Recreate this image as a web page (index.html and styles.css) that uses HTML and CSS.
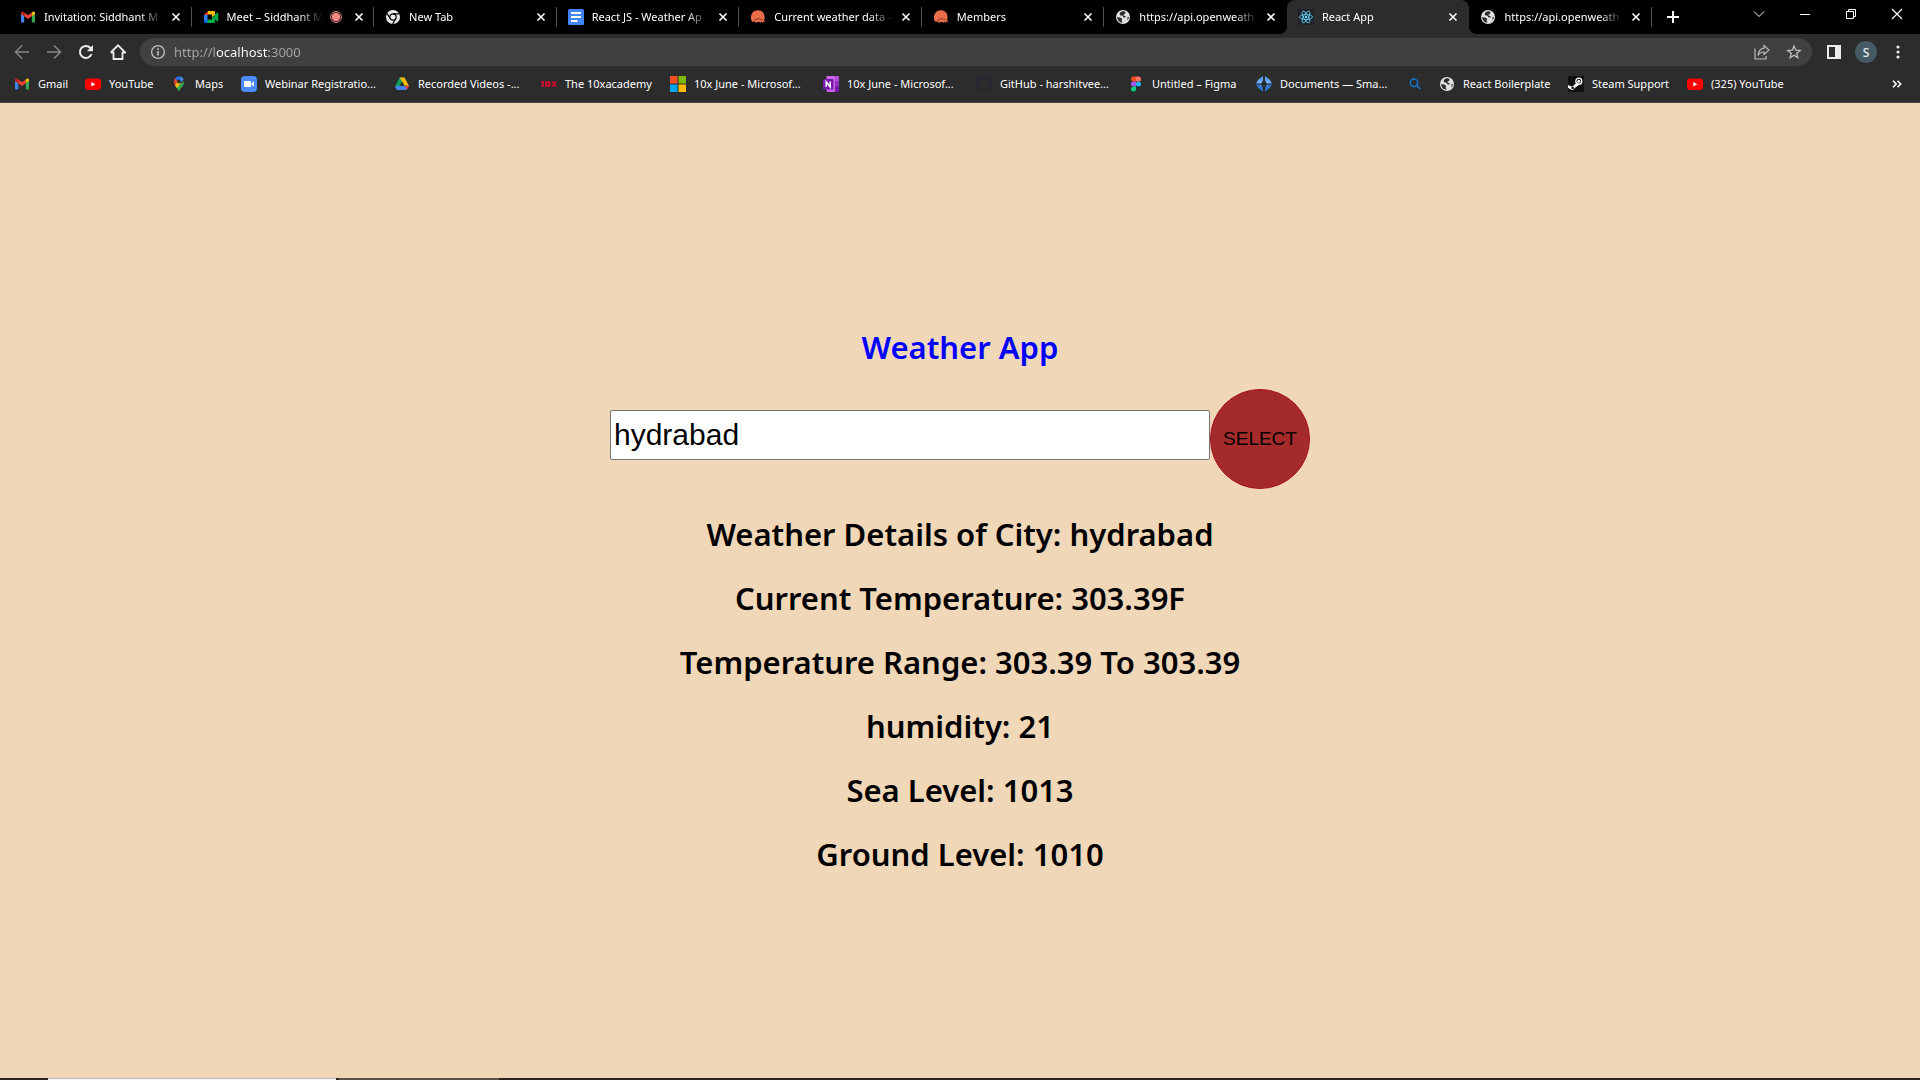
FILE: index.html
```html
<!DOCTYPE html>
<html lang="en">
<head>
<meta charset="utf-8">
<meta name="viewport" content="width=device-width, initial-scale=1">
<title>React App</title>
<link rel="stylesheet" href="styles.css">
</head>
<body>
<svg class="sprite" aria-hidden="true">
  <symbol id="gmail" viewBox="0 0 16 16">
    <path fill="#4285f4" d="M1 4.6V12.5a1 1 0 0 0 1 1h2.2V7z"/>
    <path fill="#34a853" d="M11.8 13.5H14a1 1 0 0 0 1-1V4.6L11.8 7z"/>
    <path fill="#ea4335" d="M4.2 7.2V3.4L8 6.3l3.8-2.9v3.8L8 10z"/>
    <path fill="#c5221f" d="M1 4v1l3.2 2.3V3.5l-.8-.6C2.400 2.200 1 2.800 1 4z"/>
    <path fill="#fbbc04" d="M15 4v1l-3.200 2.300V3.500l.8-.6C13.600 2.200 15 2.800 15 4z"/>
  </symbol>
  <symbol id="meet" viewBox="0 0 16 16">
    <path fill="#ea4335" d="M1 6l4-4v4z"/>
    <path fill="#fbbc04" d="M5 2h6a1 1 0 0 1 1 1v3.500L9 8V5.500H5z"/>
    <path fill="#2684fc" d="M1 6h3.500v5.500L1 12.500z"/>
    <path fill="#0066da" d="M1 11h4v3H2a1 1 0 0 1-1-1z"/>
    <path fill="#00ac47" d="M4.500 10.500H9V8l3-1.500V13a1 1 0 0 1-1 1H4.500z"/>
    <path fill="#00832d" d="M9.500 8L12 5.500v5z"/>
    <path fill="#00ac47" d="M12 5.500l2.500-2c.3-.2.700 0 .7.400v8.200c0 .4-.4.600-.7.400l-2.500-2z"/>
  </symbol>
  <symbol id="chrome" viewBox="0 0 16 16">
    <circle cx="8" cy="8" r="7" fill="#e8eaed"/>
    <circle cx="8" cy="8" r="3.200" fill="#e8eaed" stroke="#000" stroke-width="1.200"/>
    <path d="M8 4.800h6.300M5.200 9.600L2 4.200M10.800 9.600L7.600 15" stroke="#000" stroke-width="1.200" fill="none"/>
  </symbol>
  <symbol id="docs" viewBox="0 0 16 16">
    <rect width="16" height="16" rx="1.500" fill="#4285f4"/>
    <path d="M3 4h10M3 8h10M3 12h6.500" stroke="#fff" stroke-width="1.800"/>
  </symbol>
  <symbol id="openweather" viewBox="0 0 16 16">
    <path fill="#eb6e4b" d="M1 8.500C1 4 4 1.200 7.800 1.200c3.700 0 6.100 2.300 6.600 5.500.3 1.900.2 3-.3 4.100l1 2.200-1.800-.4-.4 1.400-1.400-1.500-.6 1.300-2-1-3.500 1-.6-1.400-2.600.4C1.300 11.500 1 10 1 8.500z"/>
    <path d="M5 11.800q.3-2.400 2.600-1.600 1.400-1.600 3 .2 1.500-.6 2 1" stroke="#7a2f20" stroke-width=".9" fill="none"/>
  </symbol>
  <symbol id="globe" viewBox="0 0 16 16">
    <circle cx="8" cy="8" r="7" fill="#dfe1e5"/>
    <path fill="#2c2c2c" d="M9 2.200c-2.300-.3-4.500 1.200-4.300 3 .2 1.500 1.500 1.200 2.500 1.500.9.300.6 1.500 1.700 1.800 1.300.4 2-.7 3.100-.4 1.200.4.700 2.300-.4 3.400 1.600-.8 2.300-2.300 2.300-3.500H11.500c-.9 0-1.300-1-2.200-1.200l-.9-.6c0-1 1.600-.9 2-1.900.2-.9-.3-1.900-1.400-2.100zM2.200 8c1.500.3 3.700.3 4.600 1.500.6 1-.1 1.400-.2 2.200 0 .8.900.8.8 2.100C4.500 13.600 2.200 11 2.200 8z"/>
  </symbol>
  <symbol id="react" viewBox="0 0 16 16">
    <rect width="16" height="16" rx="1.500" fill="#20232a"/>
    <g fill="none" stroke="#61dafb" stroke-width=".8">
      <ellipse cx="8" cy="8" rx="6.500" ry="2.500"/>
      <ellipse cx="8" cy="8" rx="6.500" ry="2.500" transform="rotate(60 8 8)"/>
      <ellipse cx="8" cy="8" rx="6.500" ry="2.500" transform="rotate(120 8 8)"/>
    </g>
    <circle cx="8" cy="8" r="1.300" fill="#61dafb"/>
  </symbol>
  <symbol id="youtube" viewBox="0 0 16 16">
    <rect y="2.500" width="16" height="11.500" rx="3" fill="#f00"/>
    <path fill="#fff" d="M6.300 5.900v4.600l4-2.300z"/>
  </symbol>
  <symbol id="maps" viewBox="0 0 16 16">
    <path fill="#34a853" d="M8 16c.6-2.600 1.800-3.700 3.200-5.300C12.500 9 13 7.800 12.900 5.300L5 11.500c1.400 1.600 2.400 2.400 3 4.500z"/>
    <path fill="#fbbc04" d="M3.900 9.200c.5.900 1.100 1.700 2 2.900l4-4.900-4.200-1.500z"/>
    <path fill="#ea4335" d="M4.100 2.300L7 5 3.900 9.200C2.800 7 2.700 4.200 4.100 2.300z"/>
    <path fill="#1a73e8" d="M4.100 2.300C5.400.6 7.600-.1 9.600.4L6.500 4.700z"/>
    <path fill="#4285f4" d="M9.600.4c1.500.5 2.600 1.500 3.100 3L9.800 6.800 6.500 4.700z"/>
    <circle cx="8" cy="5.500" r="1.900" fill="#2c2c2c"/>
  </symbol>
  <symbol id="zoom" viewBox="0 0 16 16">
    <rect width="16" height="16" rx="4" fill="#4a8cff"/>
    <path fill="#fff" d="M3 5h5.500a1.500 1.500 0 0 1 1.500 1.500V11H4.500A1.500 1.500 0 0 1 3 9.500zM10.600 7.200L13 5.400v5.200l-2.400-1.800z"/>
  </symbol>
  <symbol id="drive" viewBox="0 0 16 16">
    <path fill="#0f9d58" d="M5.600 1.500h2.600L9.800 4.300 4.200 14 1 10.500z"/>
    <path fill="#fbbc04" d="M5.800 1.500h4.600L15 9.800h-4.600z"/>
    <path fill="#4285f4" d="M4.200 9.800H15L12.600 14H2.900L1 10.500z"/>
    <path fill="#ea4335" d="M10.600 9.800H15l-2.200 4z"/>
    <path fill="#2c2c2c" d="M8 5.600L5.700 9.700h4.600z"/>
  </symbol>
  <symbol id="tenx" viewBox="0 0 16 16">
    <g fill="none" stroke="#c8102e" stroke-width="2">
      <path d="M0 6h1.800v5M5 6.200h3.500v3.800H5zM11 5.800l4.200 4.500M15.200 5.800L11 10.300"/>
    </g>
  </symbol>
  <symbol id="microsoft" viewBox="0 0 16 16">
    <path fill="#f25022" d="M0 0h7.500v7.500H0z"/><path fill="#7fba00" d="M8.500 0H16v7.500H8.500z"/>
    <path fill="#00a4ef" d="M0 8.500h7.500V16H0z"/><path fill="#ffb900" d="M8.500 8.500H16V16H8.500z"/>
  </symbol>
  <symbol id="onenote" viewBox="0 0 16 16">
    <path fill="#ca64ea" d="M3.500 0H12v16H4.500a1 1 0 0 1-1-1z"/>
    <path fill="#ae4bd5" d="M12 0h3a1 1 0 0 1 1 1v4h-4z"/>
    <path fill="#9332bf" d="M12 5h4v5h-4z"/><path fill="#7719aa" d="M12 10h4v5a1 1 0 0 1-1 1h-3z"/>
    <rect y="3" width="10.500" height="10.500" rx="1" fill="#7719aa"/>
    <path d="M3.200 11V5.800L7.200 11V5.500" stroke="#fff" stroke-width="1.500" fill="none"/>
  </symbol>
  <symbol id="github" viewBox="0 0 16 16">
    <path fill="#24292f" d="M8 0a8 8 0 0 0-2.530 15.590c.4.070.55-.17.55-.38v-1.490c-2.230.49-2.690-.94-2.690-.94-.36-.92-.89-1.170-.89-1.170-.73-.5.050-.49.050-.49.800.060 1.230.83 1.230.83.72 1.220 1.880.87 2.330.66.070-.52.280-.87.510-1.070-1.780-.2-3.640-.89-3.640-3.950 0-.87.310-1.590.820-2.150-.08-.2-.36-1.020.08-2.120 0 0 .67-.21 2.200.82a7.600 7.600 0 0 1 4 0c1.530-1.040 2.200-.82 2.200-.82.44 1.100.16 1.920.08 2.120.51.56.82 1.270.82 2.150 0 3.070-1.870 3.750-3.650 3.950.29.25.54.73.54 1.480v2.190c0 .21.150.46.550.38A8 8 0 0 0 8 0z"/>
  </symbol>
  <symbol id="figma" viewBox="0 0 16 16">
    <path fill="#f24e1e" d="M8 .5H5.500a2.500 2.500 0 0 0 0 5H8z"/>
    <path fill="#ff7262" d="M8 .5h2.500a2.500 2.500 0 0 1 0 5H8z"/>
    <path fill="#a259ff" d="M8 5.500H5.500a2.500 2.500 0 0 0 0 5H8z"/>
    <circle cx="10.500" cy="8" r="2.500" fill="#1abcfe"/>
    <path fill="#0acf83" d="M5.500 10.500H8V13a2.500 2.500 0 1 1-2.500-2.500z"/>
  </symbol>
  <symbol id="smallpdf" viewBox="0 0 16 16">
    <path fill="#5aa5f5" d="M7 0v5L4.500 7.500H0L2 4zM9 0v5l2.500 2.500H16L14 4z"/>
    <path fill="#2e6cc0" d="M0 8.500h4.500L7 11v5l-5-4zM16 8.500h-4.500L9 11v5l5-4z"/>
    <path fill="#8cc4ff" d="M2 4l2.500 3.500L6 6zM14 4l-2.500 3.500L10 6z"/>
    <path fill="#4a8ade" d="M2 12l2.500-3.500L6 10zM14 12l-2.500-3.500L10 10z"/>
  </symbol>
  <symbol id="search" viewBox="0 0 16 16">
    <g fill="none" stroke="#0f7bd4" stroke-width="1.500"><circle cx="7" cy="6.800" r="3.700"/><path d="M9.700 9.500l3.500 3.500"/></g>
  </symbol>
  <symbol id="steam" viewBox="0 0 16 16">
    <rect width="16" height="16" fill="#111"/>
    <circle cx="10.800" cy="5.200" r="3" fill="#111" stroke="#fff" stroke-width="1.300"/>
    <circle cx="10.800" cy="5.200" r="1.500" fill="#fff"/>
    <path d="M0 9l4.200 1.700L9 6.500l2.500 1.900-4.800 3.700a2.500 2.500 0 0 1-4.500.8L0 12z" fill="#fff"/>
    <circle cx="4.700" cy="12" r="1.300" fill="#111"/>
  </symbol>
  <symbol id="close" viewBox="0 0 10 10"><path d="M1.500 1.500l7 7M8.500 1.500l-7 7" stroke="currentColor" stroke-width="1.600" fill="none"/></symbol>
</svg>

<header class="browser">
  <div class="strip">
    <nav class="tabs" aria-label="Tabs">
      <div class="tab"><svg class="icon"><use href="#gmail"/></svg><span class="tab-title">Invitation: Siddhant M</span><button class="tab-close" aria-label="Close tab"><svg><use href="#close"/></svg></button></div>
      <div class="tab"><svg class="icon"><use href="#meet"/></svg><span class="tab-title">Meet – Siddhant M</span><svg class="recording" viewBox="0 0 12 12"><circle cx="6" cy="6" r="4.200" fill="#f28b82"/><circle cx="6" cy="6" r="5.400" fill="none" stroke="#f28b82"/></svg><button class="tab-close" aria-label="Close tab"><svg><use href="#close"/></svg></button></div>
      <div class="tab"><svg class="icon"><use href="#chrome"/></svg><span class="tab-title">New Tab</span><button class="tab-close" aria-label="Close tab"><svg><use href="#close"/></svg></button></div>
      <div class="tab"><svg class="icon"><use href="#docs"/></svg><span class="tab-title">React JS - Weather Ap</span><button class="tab-close" aria-label="Close tab"><svg><use href="#close"/></svg></button></div>
      <div class="tab"><svg class="icon"><use href="#openweather"/></svg><span class="tab-title">Current weather data -</span><button class="tab-close" aria-label="Close tab"><svg><use href="#close"/></svg></button></div>
      <div class="tab"><svg class="icon"><use href="#openweather"/></svg><span class="tab-title">Members</span><button class="tab-close" aria-label="Close tab"><svg><use href="#close"/></svg></button></div>
      <div class="tab tab-before-active"><svg class="icon"><use href="#globe"/></svg><span class="tab-title">https://api.openweath</span><button class="tab-close" aria-label="Close tab"><svg><use href="#close"/></svg></button></div>
      <div class="tab tab-active"><svg class="icon"><use href="#react"/></svg><span class="tab-title">React App</span><button class="tab-close" aria-label="Close tab"><svg><use href="#close"/></svg></button></div>
      <div class="tab"><svg class="icon"><use href="#globe"/></svg><span class="tab-title">https://api.openweath</span><button class="tab-close" aria-label="Close tab"><svg><use href="#close"/></svg></button></div>
    </nav>
    <button class="new-tab" aria-label="New tab"><svg viewBox="0 0 12 12"><path d="M6 0v12M0 6h12" stroke="currentColor" stroke-width="2"/></svg></button>
    <div class="window-controls">
      <button aria-label="Search tabs"><svg viewBox="0 0 12 12"><path d="M1 3.500l5 5 5-5" fill="none" stroke="currentColor"/></svg></button>
      <button aria-label="Minimize"><svg viewBox="0 0 12 12"><path d="M1 6.500h10" stroke="currentColor"/></svg></button>
      <button aria-label="Restore"><svg viewBox="0 0 12 12"><path d="M1.500 3.500h7v7h-7zM3.500 3.500v-2h7v7h-2" fill="none" stroke="currentColor"/></svg></button>
      <button aria-label="Close"><svg viewBox="0 0 12 12"><path d="M1 1l10 10M11 1L1 11" stroke="currentColor" stroke-width="1.200"/></svg></button>
    </div>
  </div>

  <div class="toolbar">
    <button class="tool dim" aria-label="Back"><svg viewBox="0 0 16 16"><path d="M15 8H2M8 1.500L1.500 8 8 14.500" fill="none" stroke="currentColor" stroke-width="1.600"/></svg></button>
    <button class="tool dim" aria-label="Forward"><svg viewBox="0 0 16 16"><path d="M1 8h13M8 1.500L14.500 8 8 14.500" fill="none" stroke="currentColor" stroke-width="1.600"/></svg></button>
    <button class="tool" aria-label="Reload"><svg viewBox="0 0 16 16"><path d="M13.500 10.200A6 6 0 1 1 12.300 3.800L14 5.500" fill="none" stroke="currentColor" stroke-width="2"/><path d="M15 1v6.200H8.800z" fill="currentColor"/></svg></button>
    <button class="tool" aria-label="Home"><svg viewBox="0 0 16 16"><path d="M3.500 8v7h9V8M.8 8.500L8 1.300l7.200 7.200H12M4 8.500H.8" fill="none" stroke="currentColor" stroke-width="1.800"/></svg></button>
    <div class="omnibox">
      <svg class="info" viewBox="0 0 16 16"><circle cx="8" cy="8" r="6.400" fill="none" stroke="currentColor" stroke-width="1.300"/><path d="M8 7v4.500M8 4.300v1.600" stroke="currentColor" stroke-width="1.600"/></svg>
      <input class="address" type="text" value="http://localhost:3000" aria-label="Address">
      <button class="tool dim-light" aria-label="Share"><svg viewBox="0 0 16 16"><path d="M1 4.500V15h11v-3" fill="none" stroke="currentColor" stroke-width="1.200"/><path d="M10 1.500L15 6l-5 4.500V8C7.500 8 5.500 9 4 11.500 4.500 7 7 4.500 10 4.200z" fill="none" stroke="currentColor" stroke-width="1.200"/></svg></button>
      <button class="tool dim-light" aria-label="Bookmark this page"><svg viewBox="0 0 16 16"><path d="M8 2l1.700 4.200 4.500.3-3.500 2.900 1.200 4.400L8 11.300l-3.900 2.500 1.200-4.400-3.500-2.900 4.500-.3z" fill="none" stroke="currentColor" stroke-width="1.300"/></svg></button>
    </div>
    <button class="tool" aria-label="Side panel"><svg viewBox="0 0 16 16"><path fill="currentColor" fill-rule="evenodd" d="M1 1h14v14H1zM3 3v10h6V3z"/></svg></button>
    <button class="tool avatar" aria-label="Profile">S</button>
    <button class="tool" aria-label="Menu"><svg viewBox="0 0 16 16"><g fill="currentColor"><circle cx="8" cy="3" r="1.600"/><circle cx="8" cy="8" r="1.600"/><circle cx="8" cy="13" r="1.600"/></g></svg></button>
  </div>

  <nav class="bookmarks" aria-label="Bookmarks">
    <a href="#"><svg class="icon"><use href="#gmail"/></svg>Gmail</a>
    <a href="#"><svg class="icon"><use href="#youtube"/></svg>YouTube</a>
    <a href="#"><svg class="icon"><use href="#maps"/></svg>Maps</a>
    <a href="#"><svg class="icon"><use href="#zoom"/></svg>Webinar Registratio...</a>
    <a href="#"><svg class="icon"><use href="#drive"/></svg>Recorded Videos -...</a>
    <a href="#"><svg class="icon"><use href="#tenx"/></svg>The 10xacademy</a>
    <a href="#"><svg class="icon"><use href="#microsoft"/></svg>10x June - Microsof...</a>
    <a href="#"><svg class="icon"><use href="#onenote"/></svg>10x June - Microsof...</a>
    <a href="#"><svg class="icon"><use href="#github"/></svg>GitHub - harshitvee...</a>
    <a href="#"><svg class="icon"><use href="#figma"/></svg>Untitled – Figma</a>
    <a href="#"><svg class="icon"><use href="#smallpdf"/></svg>Documents — Sma...</a>
    <a href="#" aria-label="Search"><svg class="icon"><use href="#search"/></svg></a>
    <a href="#"><svg class="icon"><use href="#globe"/></svg>React Boilerplate</a>
    <a href="#"><svg class="icon"><use href="#steam"/></svg>Steam Support</a>
    <a href="#"><svg class="icon"><use href="#youtube"/></svg>(325) YouTube</a>
    <button class="more" aria-label="More bookmarks"><svg viewBox="0 0 10 8"><path d="M1 .8L4.200 4 1 7.200M5.500.8L8.700 4 5.500 7.200" fill="none" stroke="currentColor" stroke-width="1.600"/></svg></button>
  </nav>
</header>

<main class="app">
  <h1 class="title">Weather App</h1>
  <form class="search">
    <input class="city" type="text" value="hydrabad" aria-label="City">
    <button class="select" type="button">SELECT</button>
  </form>
  <section class="details">
    <h2>Weather Details of City: hydrabad</h2>
    <h2>Current Temperature: 303.39F</h2>
    <h2>Temperature Range: 303.39 To 303.39</h2>
    <h2>humidity: 21</h2>
    <h2>Sea Level: 1013</h2>
    <h2>Ground Level: 1010</h2>
  </section>
</main>

<footer class="taskbar"><span class="task-search"></span><span class="task-item"></span></footer>
</body>
</html>
```
FILE: styles.css
```css
* { box-sizing: border-box; }

body {
  margin: 0;
  min-height: 100vh;
  display: flex;
  flex-direction: column;
  background: #f0d7b8;
  font-family: "Noto Sans", "Open Sans", sans-serif;
}

button {
  margin: 0;
  padding: 0;
  border: 0;
  background: none;
  color: inherit;
  font-family: inherit;
}

.sprite { position: absolute; width: 0; height: 0; }
.icon { width: 16px; height: 16px; flex: none; }

/* Browser chrome */
.browser {
  height: 103px;
  background: #2c2c2c;
  border-bottom: 1px solid #45474a;
  color: #fff;
  font-size: 11px;
  line-height: 16px;
}

.strip {
  display: flex;
  height: 34px;
  padding-left: 9px;
  background: #000;
}

.tabs {
  flex: 1;
  max-width: 1643px;
  display: grid;
  grid-template-columns: repeat(9, minmax(0, 1fr));
}

.tab {
  position: relative;
  display: flex;
  align-items: center;
  padding: 0 10px 0 11px;
}

.tab::after {
  content: "";
  position: absolute;
  right: 0;
  top: 7px;
  width: 1px;
  height: 20px;
  background: #505154;
}

.tab-title {
  flex: 1;
  margin-left: 8px;
  white-space: nowrap;
  mask-image: linear-gradient(to left, transparent, #000 24px);
}

.tab-close { display: flex; padding: 0 1px 0 8px; }
.tab-close svg { width: 10px; height: 10px; }
.recording { width: 12px; height: 12px; margin-left: 7px; margin-right: 4px; flex: none; }

.tab-active {
  background: #2c2c2c;
  border-radius: 8px 8px 0 0;
}

.tab-before-active::after { display: none; }

.tab-active::before,
.tab-active::after {
  content: "";
  position: absolute;
  top: auto;
  bottom: 0;
  width: 8px;
  height: 8px;
}

.tab-active::before { left: -8px; background: radial-gradient(circle at 0 0, #000 8px, #2c2c2c 8px); }
.tab-active::after { right: -8px; background: radial-gradient(circle at 100% 0, #000 8px, #2c2c2c 8px); z-index: 1; }

.new-tab { width: 42px; display: grid; place-items: center; }
.new-tab svg { width: 12px; height: 12px; }

.window-controls {
  margin-left: auto;
  display: flex;
  height: 28px;
}

.window-controls button { width: 46px; display: grid; place-items: center; }
.window-controls svg { width: 12px; height: 12px; }

.toolbar {
  display: flex;
  align-items: center;
  height: 36px;
  padding: 0 6px;
}

.tool {
  width: 32px;
  height: 28px;
  flex: none;
  display: grid;
  place-items: center;
  color: #e8eaed;
}

.tool svg { width: 16px; height: 16px; }
.dim { color: #858585; }
.dim-light { color: #bdbdbd; }

.omnibox {
  flex: 1;
  display: flex;
  align-items: center;
  height: 28px;
  margin: 0 6px;
  padding: 0 2px 0 10px;
  border-radius: 14px;
  background: #404040;
}

.info { width: 16px; height: 16px; flex: none; color: #bdc1c6; }

/* Scheme and port are greyed, the host is white */
.address {
  flex: 1;
  min-width: 0;
  height: 24px;
  margin-left: 8px;
  padding: 0;
  border: 0;
  font: 13px "Noto Sans", "Open Sans", sans-serif;
  color: transparent;
  background: linear-gradient(to right, #a5a8ab 41px, #fff 41px, #fff 95px, #a5a8ab 95px);
  background-clip: text;
}

.avatar {
  width: 22px;
  height: 22px;
  margin: 0 5px;
  border-radius: 50%;
  background: #455a64;
  font-size: 12px;
  font-weight: 500;
}

.bookmarks {
  display: grid;
  grid-template-columns: 71px 86px 70px 153px 147px 129px 153px 153px 152px 128px 151px 32px 129px 119px auto 1fr;
  align-items: center;
  height: 28px;
  padding: 0 18px 0 14px;
}

.bookmarks a {
  display: flex;
  align-items: center;
  gap: 8px;
  color: #fff;
  text-decoration: none;
  white-space: nowrap;
}

.more { justify-self: end; display: flex; }
.more svg { width: 10px; height: 8px; }

/* Weather app */
.app {
  flex: 1;
  display: flex;
  flex-direction: column;
  align-items: center;
  justify-content: center;
  gap: 20px;
  padding-top: 20px;
}

.title,
.details h2 {
  margin: 0;
  font-size: 31px;
  font-weight: 600;
  line-height: 43px;
  text-align: center;
}

.title { color: #00f; }

.search { display: flex; align-items: baseline; }

.city {
  width: 600px;
  height: 50px;
  padding: 1px 3px;
  border: 1px solid #767676;
  border-radius: 2px;
  background: #fff;
  color: #000;
  font: 30px "Liberation Sans", Arial, sans-serif;
}

.select {
  width: 100px;
  height: 100px;
  border: 1px solid #a5141c;
  border-radius: 50%;
  background: #a52a2a;
  color: #000;
  font: 19px "Liberation Sans", Arial, sans-serif;
}

.details {
  display: flex;
  flex-direction: column;
  gap: 21px;
  padding-top: 4px;
}

/* Top edge of the desktop taskbar */
.taskbar {
  display: flex;
  gap: 3px;
  height: 2px;
  padding-left: 48px;
  background: #2b2520;
}

.task-search { width: 288px; background: #f6f6f6; border-top: 1px solid #bbb; }
.task-item { width: 160px; background: #5c5349; }
```
